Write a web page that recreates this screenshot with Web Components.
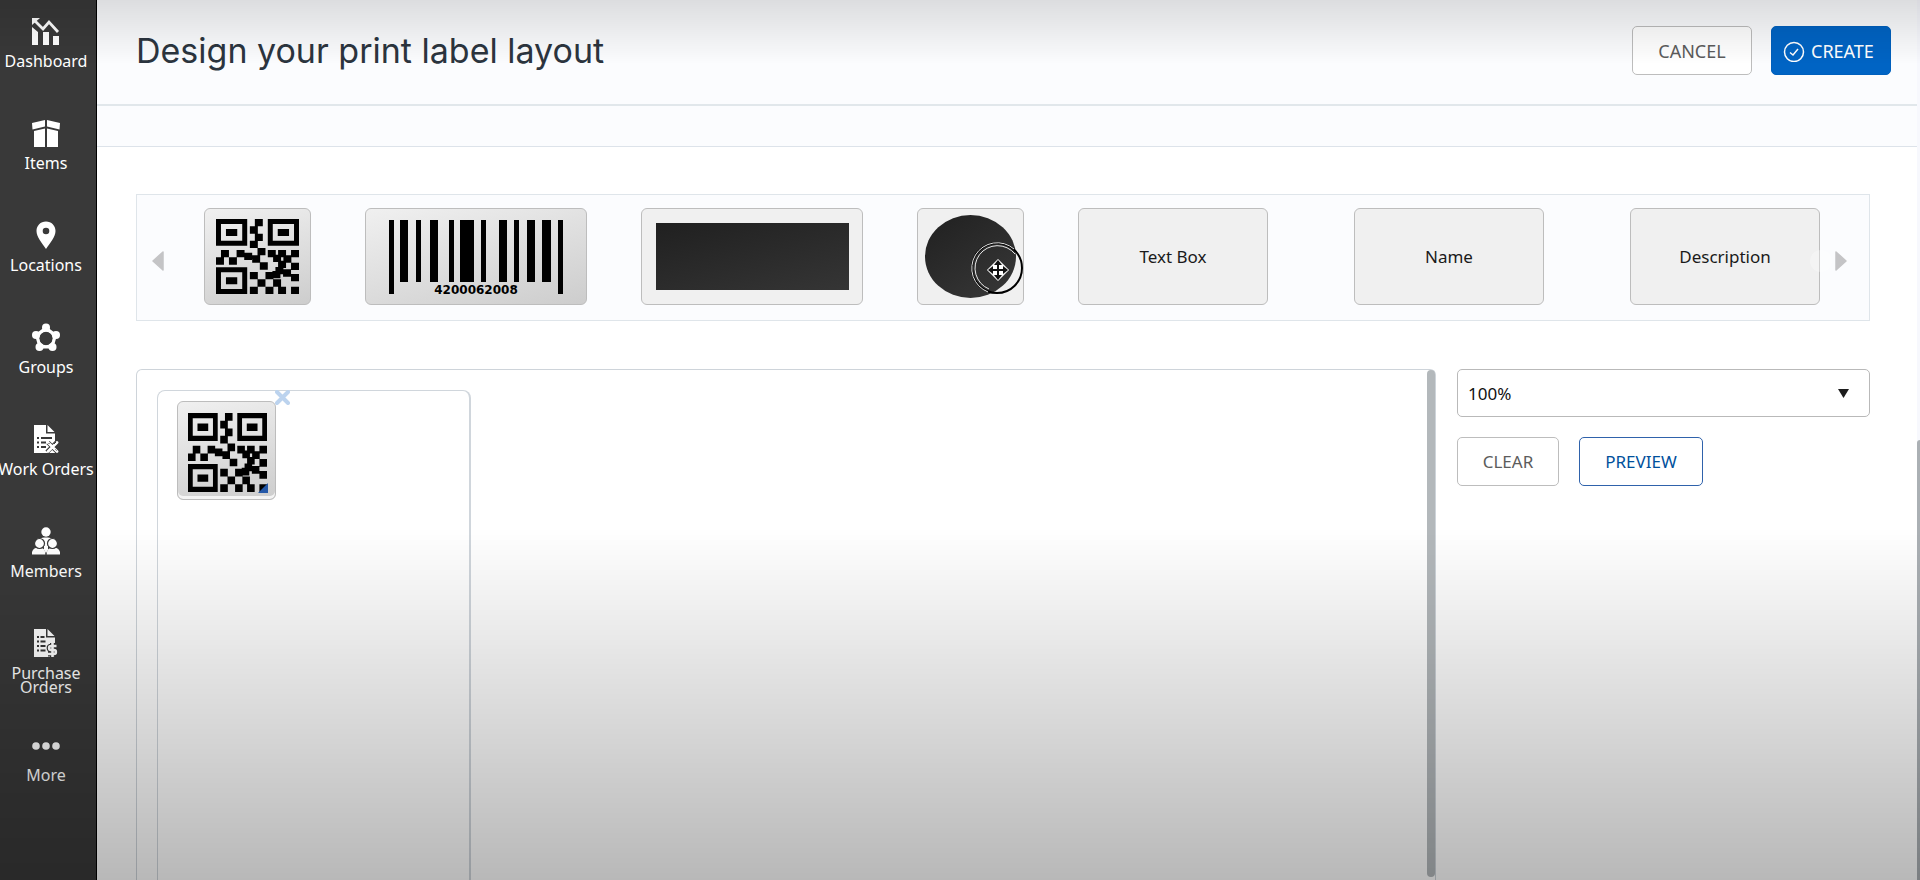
<!DOCTYPE html>
<html lang="en">
<head>
<meta charset="utf-8">
<meta name="viewport" content="width=device-width, initial-scale=1">
<title>Design your print label layout</title>
<style>
    html, body { height: 100%; margin: 0; }
    body {
        font-family: "Noto Sans", "Open Sans", sans-serif;
        font-size: 17px;
        background: #fff;
        color: #1a1a1a;
        overflow: hidden;
    }
</style>
</head>
<body>
<label-app></label-app>

<script>
// Sidebar icons, all on a 28 x 28 grid
const icons = {
    dashboard: `
        <path d="M0 10l6 5v13H0zM11 15h6v13h-6zM21 19h6v9h-6z"/>
        <path d="M0 1h8L0 8z"/>
        <path d="M3 4l8 8 6-7 9 10" fill="none" stroke="currentColor" stroke-width="2.8"/>`,
    items: `
        <path d="M0 4l13-3v6.500L.5 10.500zM28 4L15 1v6.500l12.500 3z"/>
        <path d="M2 12l11-2.500V28H2zM26 12l-11-2.500V28h11z"/>`,
    locations: `
        <path fill-rule="evenodd" d="M14 0.500C8.500.500 4.500 4.700 4.500 10c0 6 5.500 12 9.500 18 4-6 9.500-12 9.500-18C23.500 4.700 19.500.5 14 .5zM14 6.700a3.300 3.300 0 1 1 0 6.600 3.300 3.300 0 0 1 0-6.600z"/>`,
    groups: `
        <path d="M14 5L4.500 12l3.500 12h12l3.500-12z" fill="none" stroke="currentColor" stroke-width="3"/>
        <circle cx="14" cy="15.500" r="8" fill="none" stroke="currentColor" stroke-width="2.500"/>
        <circle cx="14" cy="4.500" r="4"/><circle cx="4" cy="12" r="4"/><circle cx="24" cy="12" r="4"/>
        <circle cx="7.500" cy="24" r="4"/><circle cx="20.500" cy="24" r="4"/>`,
    orders: `
        <path d="M2 0h12v8.500h9V28H2z"/><path d="M15.500 0l7 7h-7z"/>
        <g fill="#393939"><path d="M5 12h2v2H5zM9 12h11v2H9zM5 16.500h2v2H5zM9 16.500h5v2H9zM5 21h2v2H5zM9 21h5v2H9z"/></g>
        <path d="M16 17.500l9 9M25 17L15 27" stroke="#393939" stroke-width="4.500"/>
        <path d="M16 17.500l9 9M25 17.500l-9 9" stroke="currentColor" stroke-width="2.800" stroke-linecap="round"/>
        <path d="M23.500 24.500l1 1M16.500 18l1 1M24 17l-2 2" stroke="#393939"/>`,
    members: `
        <circle cx="14" cy="5" r="4.700"/>
        <path d="M8 11.500c2-1.500 10-1.500 12 0l-4 4v8l-2 3-2-3v-8z"/>
        <g stroke="#393939" stroke-width="1.200">
            <path d="M-1 28c0-6 3-8 8-8s7 2 7 8zM14 28c0-6 3-8 7-8s8 2 8 8z"/>
            <circle cx="7.500" cy="16.500" r="5"/><circle cx="20.500" cy="16.500" r="5"/>
        </g>
        <path d="M12 19h4v4l-2 3-2-3z"/>`,
    purchase: `
        <path d="M2 0h12v8.500h9V28H2z"/><path d="M15.500 0l7 7h-7z"/>
        <g fill="#353535"><path d="M5 7h2v2H5zM8.500 7h4v2h-4zM5 11.500h2v2H5zM8.500 11.500h5v2h-5zM5 16h2v2H5zM8.500 16h5v2h-5zM5 20.500h2v2H5zM8.500 20.500h5v2h-5z"/></g>
        <g fill="none">
            <path d="M24 17h-5c-2.500 0-2.500 4 0 4h3c2.500 0 2.500 4 0 4h-6M20.500 14v14" stroke="#353535" stroke-width="5"/>
            <path d="M24.500 17h-5.500c-2.500 0-2.500 4 0 4h3c2.500 0 2.500 4 0 4h-6M20.500 14v14" stroke="currentColor" stroke-width="2.600"/>
        </g>`,
    more: `<circle cx="4" cy="15" r="3.800"/><circle cx="14" cy="15" r="3.800"/><circle cx="24" cy="15" r="3.800"/>`
};

class NavItem extends HTMLElement {
    constructor() {
        super();
        this.attachShadow({ mode: "open" });
    }

    connectedCallback() {
        this.shadowRoot.innerHTML = `
            <style>
                :host { display: block; height: 102px; }
                a {
                    display: flex;
                    flex-direction: column;
                    align-items: center;
                    gap: 9px;
                    padding-top: 17px;
                    color: #fff;
                    font-size: 16px;
                    line-height: 14px;
                    text-align: center;
                    text-decoration: none;
                }
                svg { width: 28px; height: 28px; fill: currentColor; overflow: hidden; }
                span { width: 96px; }
            </style>
            <a href="#">
                <svg viewBox="0 0 28 28" aria-hidden="true">${icons[this.getAttribute("icon")]}</svg>
                <span><slot></slot></span>
            </a>
        `;
    }
}
customElements.define("nav-item", NavItem);

class SideBar extends HTMLElement {
    constructor() {
        super();
        this.attachShadow({ mode: "open" });
        this.shadowRoot.innerHTML = `
            <style>
                :host { display: block; background: #393939; border-right: 1px solid #000; }
                nav { display: flex; flex-direction: column; width: 92px; margin-right: 4px; }
            </style>
            <nav aria-label="Main">
                <nav-item icon="dashboard">Dashboard</nav-item>
                <nav-item icon="items">Items</nav-item>
                <nav-item icon="locations">Locations</nav-item>
                <nav-item icon="groups">Groups</nav-item>
                <nav-item icon="orders">Work Orders</nav-item>
                <nav-item icon="members">Members</nav-item>
                <nav-item icon="purchase">Purchase Orders</nav-item>
                <nav-item icon="more">More</nav-item>
            </nav>
        `;
    }
}
customElements.define("side-bar", SideBar);

class ActionButton extends HTMLElement {
    constructor() {
        super();
        this.attachShadow({ mode: "open" });
        this.shadowRoot.innerHTML = `
            <style>
                :host { display: block; }
                button {
                    display: flex;
                    align-items: center;
                    justify-content: center;
                    gap: 6px;
                    box-sizing: border-box;
                    width: 100%;
                    height: 49px;
                    padding: 0 20px;
                    border: 1px solid #bdbdbd;
                    border-radius: 5px;
                    background: #fff;
                    color: #5c5c5c;
                    font: inherit;
                    cursor: pointer;
                }
                :host([kind="primary"]) button {
                    justify-content: flex-start;
                    padding: 0 11px;
                    border-color: #0060bd;
                    background: #0064c4;
                    color: #fff;
                }
                :host([kind="outline"]) button { border-color: #2f62ab; color: #00509c; }
            </style>
            <button type="button"><slot name="icon"></slot><slot></slot></button>
        `;
    }
}
customElements.define("action-button", ActionButton);

class PageHeader extends HTMLElement {
    constructor() {
        super();
        this.attachShadow({ mode: "open" });
        this.shadowRoot.innerHTML = `
            <style>
                :host { display: block; background: #fbfcfe; border-bottom: 1px solid #dde3ea; }
                header {
                    display: flex;
                    align-items: center;
                    justify-content: space-between;
                    height: 106px;
                    padding: 0 26px 3px 39px;
                    border-bottom: 2px solid #e1e7eb;
                    box-sizing: border-box;
                }
                h1 {
                    margin: 0;
                    color: #2c353f;
                    font: 400 34px/48px Inter, "Open Sans", sans-serif;
                }
                .actions { display: flex; gap: 19px; font-size: 18px; }
                action-button { width: 120px; }
                svg { width: 22px; height: 22px; fill: none; stroke: currentColor; stroke-width: 1.5; }
                .strip { height: 40px; }
            </style>
            <header>
                <h1><slot></slot></h1>
                <div class="actions">
                    <action-button>CANCEL</action-button>
                    <action-button kind="primary">
                        <svg slot="icon" viewBox="0 0 22 22" aria-hidden="true"><circle cx="11" cy="12" r="9.500"/><path d="M7 12.500l3 2.500 5-6"/></svg>CREATE
                    </action-button>
                </div>
            </header>
            <div class="strip"></div>
        `;
    }
}
customElements.define("page-header", PageHeader);

class QrCode extends HTMLElement {
    constructor() {
        super();
        this.attachShadow({ mode: "open" });
    }

    connectedCallback() {
        const dots = [
            [117, 0], [102, 22], [117, 44], [102, 65], [125, 87],
            [15, 93], [62, 93], [85, 101], [109, 109], [132, 130], [0, 115], [39, 115],
            [156, 93], [187, 93], [226, 93], [172, 107], [203, 109], [187, 125], [226, 131],
            [179, 144], [202, 151], [170, 156], [226, 165],
            [102, 159], [149, 159], [125, 181], [172, 181], [102, 203], [149, 203], [187, 203], [226, 203]
        ].map(([x, y]) => `M${x} ${y}h24v22h-24z`).join("");
        const eyes = [[0, 0], [156, 0], [0, 145]]
            .map(([x, y]) => `M${x} ${y}h94v80h-94zm15 15v50h64v-50zm15 15h34v21h-34z`).join("");

        this.shadowRoot.innerHTML = `
            <style>
                :host { display: block; }
                svg { display: block; width: 100%; height: 100%; }
            </style>
            <svg viewBox="0 0 250 225" preserveAspectRatio="none" role="img" aria-label="QR code">
                <path fill-rule="evenodd" d="${eyes}"/><path d="${dots}"/>
            </svg>
        `;
    }
}
customElements.define("qr-code", QrCode);

class BarCode extends HTMLElement {
    constructor() {
        super();
        this.attachShadow({ mode: "open" });
    }

    connectedCallback() {
        // x and width of every bar; the first and the last run down to the digits
        const bars = [[0, 5, 74], [11, 8], [27, 5], [41, 8], [60, 5], [71, 14], [92, 5], [110, 8], [125, 5], [138, 8], [153, 9], [169, 5, 74]]
            .map(([x, w, h = 62]) => `<rect x="${x}" width="${w}" height="${h}"/>`).join("");

        this.shadowRoot.innerHTML = `
            <style>
                :host { display: block; width: 174px; }
                svg { display: block; overflow: visible; }
                text { font: bold 12px "DejaVu Sans", sans-serif; text-anchor: middle; }
            </style>
            <svg width="174" height="74" viewBox="0 0 174 74">${bars}<text x="87" y="74">${this.getAttribute("value")}</text></svg>
        `;
    }
}
customElements.define("bar-code", BarCode);

class PaletteCard extends HTMLElement {
    constructor() {
        super();
        this.attachShadow({ mode: "open" });
        this.shadowRoot.innerHTML = `
            <style>
                :host {
                    display: flex;
                    align-items: center;
                    justify-content: center;
                    flex: none;
                    position: relative;
                    box-sizing: border-box;
                    width: 107px;
                    height: 97px;
                    border: 1px solid #bdbdbd;
                    border-radius: 6px;
                    background: #f0f0f0;
                    cursor: move;
                }
                :host([size="wide"]) { width: 222px; }
                :host([size="text"]) { width: 190px; }
                :host([shade]) { background: linear-gradient(165deg, #f0f0f0, #cdcdcd); }
            </style>
            <slot></slot>
        `;
    }
}
customElements.define("palette-card", PaletteCard);

class PaletteStrip extends HTMLElement {
    constructor() {
        super();
        this.attachShadow({ mode: "open" });
        this.shadowRoot.innerHTML = `
            <style>
                :host {
                    display: flex;
                    align-items: center;
                    box-sizing: border-box;
                    height: 127px;
                    padding: 0 22px 2px 15px;
                    border: 1px solid #dfe5ea;
                    background: #fbfcfe;
                }
                .cards { flex: 1; display: flex; align-items: center; gap: 54px; padding-left: 40px; }
                palette-card[size="text"] + palette-card[size="text"] { margin-left: 32px; }
                .arrow { position: relative; padding: 8px 0 0; border: 0; background: none; color: #c4c4c6; cursor: pointer; }
                .arrow svg { display: block; width: 12px; height: 20px; fill: currentColor; stroke: currentColor; stroke-width: 1.5; stroke-linejoin: round; }
                .next::before {
                    content: "";
                    position: absolute;
                    top: 7px; left: -25px;
                    width: 22px; height: 22px;
                    border-radius: 50%;
                    background: rgba(255, 255, 255, 0.3);
                }
                qr-code { width: 83px; height: 75px; }
                .rect { width: 193px; height: 67px; background: linear-gradient(165deg, #202020, #353535); }
                .ellipse { width: 91px; height: 83px; border-radius: 50%; background: linear-gradient(145deg, #202020, #383838); }
                .cursor { position: absolute; right: -1px; bottom: 9px; width: 54px; height: 54px; fill: none; }
            </style>
            <button class="arrow" type="button" aria-label="Previous"><svg viewBox="0 0 12 20"><path d="M11 1v18L1 10z"/></svg></button>
            <div class="cards">
                <palette-card shade><qr-code></qr-code></palette-card>
                <palette-card size="wide" shade><bar-code value="4200062008"></bar-code></palette-card>
                <palette-card size="wide"><div class="rect"></div></palette-card>
                <palette-card>
                    <div class="ellipse"></div>
                    <svg class="cursor" viewBox="0 0 54 54" aria-hidden="true">
                        <circle cx="27" cy="27" r="25" stroke="#000" stroke-width="2"/>
                        <path d="M18 51A25.500 25.500 0 1 1 44 8" stroke="#e8e8e8"/>
                        <path d="M19 48A22.500 22.500 0 1 1 45 13" stroke="#e8e8e8"/>
                        <path d="M28 18.500l10.500 10.500L28 39.500 17.500 29z" fill="#fff" stroke="#fff"/>
                        <path d="M28 21v16M20 29h16" stroke="#111" stroke-width="2"/>
                        <path d="M28 19l4 5h-8zM28 39l4-5h-8zM18 29l5-4v8zM38 29l-5-4v8z" fill="#111"/>
                    </svg>
                </palette-card>
                <palette-card size="text">Text Box</palette-card>
                <palette-card size="text">Name</palette-card>
                <palette-card size="text">Description</palette-card>
            </div>
            <button class="arrow next" type="button" aria-label="Next"><svg viewBox="0 0 12 20"><path d="M1 1v18l10-9z"/></svg></button>
        `;
    }
}
customElements.define("palette-strip", PaletteStrip);

class LabelCanvas extends HTMLElement {
    constructor() {
        super();
        this.attachShadow({ mode: "open" });
        this.shadowRoot.innerHTML = `
            <style>
                :host {
                    display: flex;
                    justify-content: space-between;
                    box-sizing: border-box;
                    border: 1px solid #ced4da;
                    border-bottom: 0;
                    border-radius: 6px 6px 0 0;
                }
                .label {
                    box-sizing: border-box;
                    width: 314px;
                    margin: 20px 0 0 20px;
                    padding: 10px 0 0 19px;
                    border: solid #d0d6dc;
                    border-width: 1px 2px 0 1px;
                    border-radius: 8px 8px 0 0;
                }
                /* dropped item: free on the label, with its own remove and resize handles */
                .dropped {
                    position: relative;
                    box-sizing: border-box;
                    width: 99px; height: 99px;
                    padding: 11px 8px 8px 10px;
                    border: 1px solid #bdbdbd;
                    border-radius: 6px;
                    background: linear-gradient(165deg, #f0f0f0, #cdcdcd);
                    box-shadow: inset 0 -3px #f4f4f4;
                }
                qr-code { width: 79px; height: 79px; }
                .remove { position: absolute; top: -12px; right: -15px; padding: 0; border: 0; background: none; color: #bcd3ee; }
                .remove svg { display: block; width: 15px; height: 15px; stroke: currentColor; stroke-width: 4; stroke-linecap: round; }
                .resize { position: absolute; right: 7px; bottom: 6px; width: 10px; height: 10px; fill: #2458a8; }
                .thumb { width: 8px; margin-bottom: 3px; border-radius: 4px; background: #b3b8bb; }
            </style>
            <div class="label">
                <div class="dropped">
                    <qr-code></qr-code>
                    <button class="remove" type="button" aria-label="Remove"><svg viewBox="0 0 15 15"><path d="M2 2l11 11M13 2L2 13"/></svg></button>
                    <svg class="resize" viewBox="0 0 10 10" aria-hidden="true"><path d="M10 0v10H0z"/></svg>
                </div>
            </div>
            <div class="thumb"></div>
        `;
    }
}
customElements.define("label-canvas", LabelCanvas);

class CanvasTools extends HTMLElement {
    constructor() {
        super();
        this.attachShadow({ mode: "open" });
        this.shadowRoot.innerHTML = `
            <style>
                :host { display: flex; flex-direction: column; gap: 20px; }
                .zoom { display: grid; align-items: center; }
                .zoom > * { grid-area: 1 / 1; }
                select {
                    appearance: none;
                    box-sizing: border-box;
                    width: 100%;
                    height: 48px;
                    padding: 0 10px;
                    border: 1px solid #b9b9b9;
                    border-radius: 5px;
                    background: #fff;
                    color: #111;
                    font: inherit;
                }
                .zoom svg { justify-self: end; width: 11px; height: 9px; margin-right: 21px; fill: #1c1c1c; pointer-events: none; }
                .row { display: flex; gap: 20px; }
                .clear { width: 102px; }
                .preview { width: 124px; }
            </style>
            <div class="zoom">
                <select aria-label="Zoom"><option>100%</option></select>
                <svg viewBox="0 0 11 9" aria-hidden="true"><path d="M0 0h11L5.500 9z"/></svg>
            </div>
            <div class="row">
                <action-button class="clear">CLEAR</action-button>
                <action-button class="preview" kind="outline">PREVIEW</action-button>
            </div>
        `;
    }
}
customElements.define("canvas-tools", CanvasTools);

class LabelApp extends HTMLElement {
    constructor() {
        super();
        this.attachShadow({ mode: "open" });
        this.shadowRoot.innerHTML = `
            <style>
                :host { display: grid; grid-template-columns: 97px 1fr 3px; height: 100vh; }
                side-bar { box-sizing: border-box; }
                main { display: flex; flex-direction: column; min-width: 0; }
                .content {
                    flex: 1;
                    display: flex;
                    flex-direction: column;
                    gap: 48px;
                    padding: 47px 47px 0 39px;
                }
                .work { flex: 1; display: grid; grid-template-columns: 1fr 413px; gap: 21px; }
                .track { display: flex; align-items: end; background: #f7f8fd; }
                .thumb { width: 100%; height: 50%; border-radius: 3px 0 0 0; background: #abb0b4; }
                /* soft shade along the top and bottom edges of the window */
                .shade {
                    position: fixed;
                    inset: 0;
                    pointer-events: none;
                    background:
                        linear-gradient(rgba(0, 0, 0, 0.12), transparent 64px),
                        linear-gradient(transparent 60%, rgba(0, 0, 0, 0.28));
                }
            </style>
            <side-bar></side-bar>
            <main>
                <page-header>Design your print label layout</page-header>
                <div class="content">
                    <palette-strip></palette-strip>
                    <div class="work">
                        <label-canvas></label-canvas>
                        <canvas-tools></canvas-tools>
                    </div>
                </div>
            </main>
            <div class="track"><div class="thumb"></div></div>
            <div class="shade"></div>
        `;
    }
}
customElements.define("label-app", LabelApp);
</script>
</body>
</html>
